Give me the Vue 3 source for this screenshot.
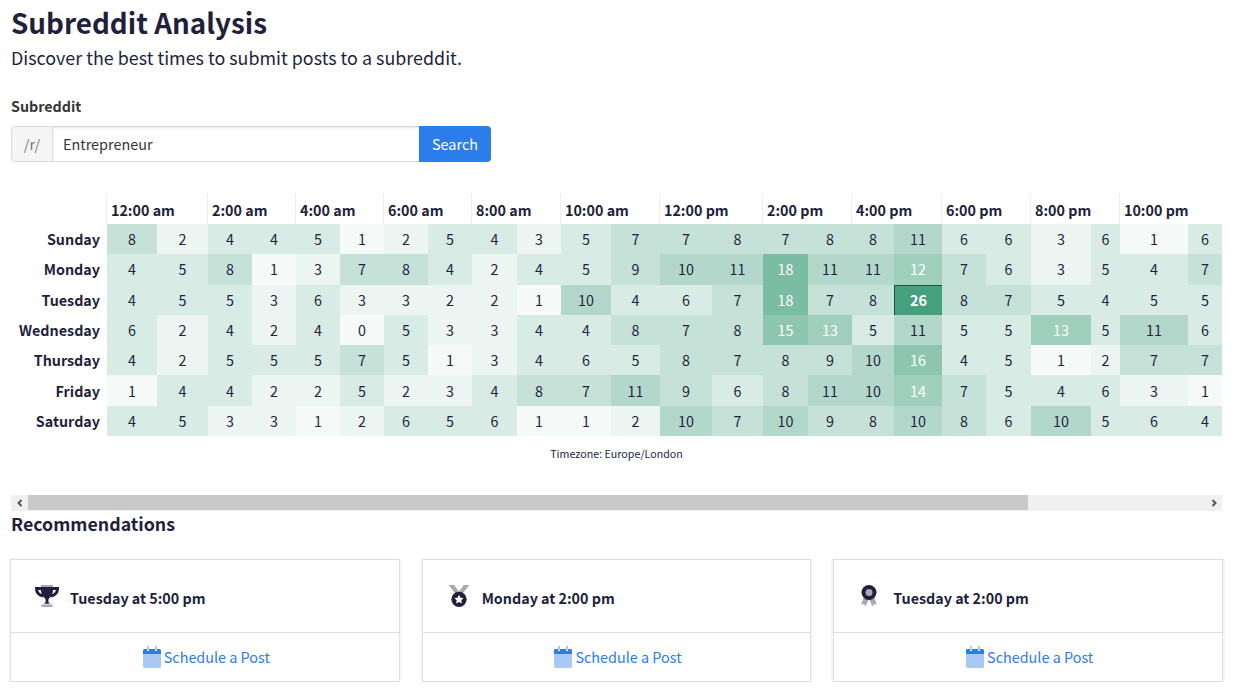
<script setup>
	const hours = ['12:00 am', '2:00 am', '4:00 am', '6:00 am', '8:00 am', '10:00 am', '12:00 pm', '2:00 pm', '4:00 pm', '6:00 pm', '8:00 pm', '10:00 pm']

	const colWidths = [50, 51, 44, 44, 44, 44, 44, 44, 45, 44, 50, 49, 52, 51, 45, 44, 42, 48, 44, 45, 60, 29, 68, 34]

	const rows = [
		{ day: 'Sunday', values: [8, 2, 4, 4, 5, 1, 2, 5, 4, 3, 5, 7, 7, 8, 7, 8, 8, 11, 6, 6, 3, 6, 1, 6] },
		{ day: 'Monday', values: [4, 5, 8, 1, 3, 7, 8, 4, 2, 4, 5, 9, 10, 11, 18, 11, 11, 12, 7, 6, 3, 5, 4, 7] },
		{ day: 'Tuesday', values: [4, 5, 5, 3, 6, 3, 3, 2, 2, 1, 10, 4, 6, 7, 18, 7, 8, 26, 8, 7, 5, 4, 5, 5] },
		{ day: 'Wednesday', values: [6, 2, 4, 2, 4, 0, 5, 3, 3, 4, 4, 8, 7, 8, 15, 13, 5, 11, 5, 5, 13, 5, 11, 6] },
		{ day: 'Thursday', values: [4, 2, 5, 5, 5, 7, 5, 1, 3, 4, 6, 5, 8, 7, 8, 9, 10, 16, 4, 5, 1, 2, 7, 7] },
		{ day: 'Friday', values: [1, 4, 4, 2, 2, 5, 2, 3, 4, 8, 7, 11, 9, 6, 8, 11, 10, 14, 7, 5, 4, 6, 3, 1] },
		{ day: 'Saturday', values: [4, 5, 3, 3, 1, 2, 6, 5, 6, 1, 1, 2, 10, 7, 10, 9, 8, 10, 8, 6, 10, 5, 6, 4] }
	]

	const recommendations = [
		{ icon: 'trophy', text: 'Tuesday at 5:00 pm' },
		{ icon: 'medal', text: 'Monday at 2:00 pm' },
		{ icon: 'award', text: 'Tuesday at 2:00 pm' }
	]

	// The heat colours come in steps, so 4, 5 and 6 all share one shade.
	function heat(v) {
		if (v <= 1) return '#f5f9f8'
		if (v <= 3) return '#ecf5f2'
		if (v <= 6) return '#d9ebe5'
		if (v <= 9) return '#c6e1d8'
		if (v <= 11) return '#b3d8cb'
		if (v <= 14) return '#a0cfbe'
		if (v <= 16) return '#8dc5b1'
		if (v <= 18) return '#7bbca5'
		return '#43a17d'
	}
</script>

<template>
	<div class="page">
		<h1>Subreddit Analysis</h1>
		<p class="lead">Discover the best times to submit posts to a subreddit.</p>

		<label class="field-label">Subreddit</label>
		<div class="input-group">
			<span class="prefix">/r/</span>
			<input class="input" type="text" value="Entrepreneur">
			<button class="search">Search</button>
		</div>

		<div class="scroller">
			<table class="heatmap">
				<colgroup>
					<col class="day-col">
					<col v-for="(w, i) in colWidths" :key="i" :style="{ width: w + 'px' }">
				</colgroup>
				<thead>
					<tr>
						<th></th>
						<th v-for="h in hours" :key="h" colspan="2" class="hour">{{ h }}</th>
					</tr>
				</thead>
				<tbody>
					<tr v-for="row in rows" :key="row.day">
						<th class="day">{{ row.day }}</th>
						<td
							v-for="(v, i) in row.values"
							:key="i"
							:class="{ light: v >= 12, top: v === 26 }"
							:style="{ background: heat(v) }"
						>{{ v }}</td>
					</tr>
				</tbody>
			</table>
			<div class="timezone">Timezone: Europe/London</div>
		</div>

		<div class="scrollbar">
			<span class="arrow"><svg width="8" height="8" viewBox="0 0 8 8"><path d="M5.500 1 2.500 4l3 3" fill="none" stroke="#555" stroke-width="2"/></svg></span>
			<div class="track"><div class="thumb"></div></div>
			<span class="arrow"><svg width="8" height="8" viewBox="0 0 8 8"><path d="M2.500 1l3 3-3 3" fill="none" stroke="#555" stroke-width="2"/></svg></span>
		</div>

		<h2>Recommendations</h2>

		<div class="cards">
			<div class="card" v-for="r in recommendations" :key="r.icon">
				<div class="card-body">
					<svg v-if="r.icon === 'trophy'" class="award-icon trophy" viewBox="0 0 24 22">
						<path fill="#a9a8b3" d="M6 0h12v2H6zM6.500 19.500h11V22h-11z"/>
						<path fill="#221f3c" d="M5.800 2h12.400c0 5.500-1 8.500-3.200 10.400-.9.800-1.600 1.400-1.600 3v1.100c0 1 .8 1.500 1.600 2.200H9c.8-.7 1.600-1.200 1.600-2.200v-1.100c0-1.600-.7-2.200-1.600-3C6.800 10.500 5.800 7.500 5.800 2z"/>
						<path fill="none" stroke="#221f3c" stroke-width="3" d="M6 3.500H1.500c0 4 2.500 6.600 6.500 7.600M18 3.500h4.500c0 4-2.500 6.600-6.500 7.600"/>
					</svg>
					<svg v-else-if="r.icon === 'medal'" class="award-icon medal" viewBox="0 0 22 23">
						<path fill="#a9a8b3" d="M0 0h6l5 7-3 3zM22 0h-6l-5 7 3 3z"/>
						<circle cx="11" cy="15" r="8" fill="#221f3c"/>
						<path fill="#fff" d="m11 10.300 1.500 3 3.300.4-2.400 2.300.6 3.300-3-1.600-3 1.600.6-3.300-2.400-2.300 3.300-.4z"/>
					</svg>
					<svg v-else class="award-icon ribbon" viewBox="0 0 16 22">
						<path fill="#a9a8b3" d="M3.500 11 0 19.500l3-.5 1.500 2.500L8 14l3.500 7.500L13 19l3 .5L12.500 11z"/>
						<circle cx="8" cy="7.500" r="7.500" fill="#221f3c"/>
						<circle cx="8" cy="7.500" r="3.500" fill="#a9a8b3"/>
					</svg>
					<span class="when">{{ r.text }}</span>
				</div>
				<div class="card-foot">
					<a class="schedule" href="#">
						<svg class="calendar" viewBox="0 0 18 22">
							<path fill="#a9c9f5" d="M0 8h18v12.300c0 1-.7 1.700-1.700 1.700H1.700C.7 22 0 21.300 0 20.300z"/>
							<path fill="#a9c9f5" d="M4 0h2v4H4zM12 0h2v4h-2z"/>
							<path fill="#2b7de9" d="M1.700 3H4v2h2V3h6v2h2V3h2.300C17.300 3 18 3.700 18 4.700V8H0V4.700C0 3.700.7 3 1.700 3z"/>
						</svg>
						Schedule a Post
					</a>
				</div>
			</div>
		</div>
	</div>
</template>

<style>
	body {
		background: #fff;
	}
</style>

<style scoped>
	.page {
		padding: 0 12px 0 11px;
		color: #221f3c;
		font-family: "Noto Sans CJK SC", "Noto Sans", sans-serif;
	}
	h1 {
		margin: 0;
		padding-top: 4px;
		font-size: 27.8px;
		line-height: 36px;
		font-weight: 600;
	}
	.lead {
		margin: 3px 0 0;
		font-size: 17.9px;
		line-height: 28px;
	}
	.field-label {
		display: block;
		margin-top: 23px;
		font-size: 14.3px;
		line-height: 24px;
		font-weight: 700;
		color: #363636;
	}
	.input-group {
		display: flex;
		width: 480px;
		height: 36px;
		margin-top: 8px;
		font-size: 14.4px;
	}
	.prefix {
		display: flex;
		align-items: center;
		justify-content: center;
		box-sizing: border-box;
		width: 42px;
		padding-bottom: 2px;
		background: #f5f5f5;
		border: 1px solid #dbdbdb;
		border-radius: 4px 0 0 4px;
		color: #7a7a7a;
	}
	.input {
		flex: 1;
		min-width: 0;
		box-sizing: border-box;
		padding: 0 10px 2px;
		border: 1px solid #dbdbdb;
		border-left: none;
		border-right: none;
		box-shadow: inset 0 1px 2px rgba(10, 10, 10, .1);
		outline: none;
		font: inherit;
		color: #363636;
	}
	.search {
		width: 72px;
		padding: 0 0 2px;
		border: none;
		border-radius: 0 4px 4px 0;
		background: #2b7de9;
		color: #fff;
		font: inherit;
	}
	.scroller {
		overflow: hidden;
		margin-top: 32px;
		height: 301px;
	}
	.heatmap {
		table-layout: fixed;
		width: 1211px;
		border-collapse: separate;
		border-spacing: 0;
		font-size: 14.3px;
	}
	.day-col {
		width: 96px;
	}
	th, td {
		padding: 0;
		box-sizing: border-box;
	}
	.hour {
		height: 30px;
		padding-left: 4px;
		box-shadow: -1px 0 0 #eee;
		text-align: left;
		font-size: 14.3px;
		font-weight: 700;
		white-space: nowrap;
	}
	.day {
		padding: 0 7px 1px 0;
		text-align: right;
		font-size: 14.3px;
		font-weight: 700;
		white-space: nowrap;
	}
	tbody tr {
		height: 30.3px;
	}
	td {
		text-align: center;
		line-height: 20px;
	}
	td.light {
		color: #fff;
	}
	td.top {
		font-weight: 700;
		border: 1px solid #1f4f3d;
		border-right: none;
		border-bottom: none;
	}
	.timezone {
		margin-top: 9px;
		text-align: center;
		font-size: 10.7px;
		line-height: 17px;
	}
	.scrollbar {
		display: flex;
		height: 16px;
		background: #f0f0f0;
	}
	.arrow {
		display: flex;
		align-items: center;
		justify-content: center;
		width: 17px;
	}
	.track {
		flex: 1;
	}
	.thumb {
		width: 1000px;
		height: 15px;
		background: #c9c9c9;
	}
	h2 {
		margin: 0;
		font-size: 17.8px;
		line-height: 24px;
		font-weight: 700;
	}
	.cards {
		display: flex;
		gap: 22px;
		margin: 24px 0 0 -1px;
		width: 1213px;
	}
	.card {
		flex: 1;
		box-sizing: border-box;
		border: 1px solid #dedede;
		background: #fff;
		box-shadow: 0 1px 3px rgba(10, 10, 10, .1);
	}
	.card-body {
		display: flex;
		align-items: center;
		box-sizing: border-box;
		height: 73px;
		padding: 2px 0 0 24px;
		border-bottom: 1px solid #dedede;
	}
	.award-icon {
		flex: none;
		height: 22px;
		margin-top: -2px;
	}
	.trophy {
		width: 24px;
		margin-right: 11px;
	}
	.medal {
		width: 22px;
		margin-left: 1px;
		margin-right: 12px;
	}
	.ribbon {
		width: 16px;
		margin-left: 3px;
		margin-right: 16px;
	}
	.when {
		padding-top: 2px;
		font-size: 14.3px;
		font-weight: 700;
		line-height: 20px;
	}
	.card-foot {
		display: flex;
		justify-content: center;
		align-items: center;
		box-sizing: border-box;
		height: 48px;
		padding-bottom: 1px;
	}
	.schedule {
		display: flex;
		align-items: center;
		gap: 3px;
		margin-left: 3px;
		color: #2b7de9;
		font-size: 14.4px;
		line-height: 22px;
		text-decoration: none;
	}
	.calendar {
		width: 18px;
		height: 22px;
	}
</style>
